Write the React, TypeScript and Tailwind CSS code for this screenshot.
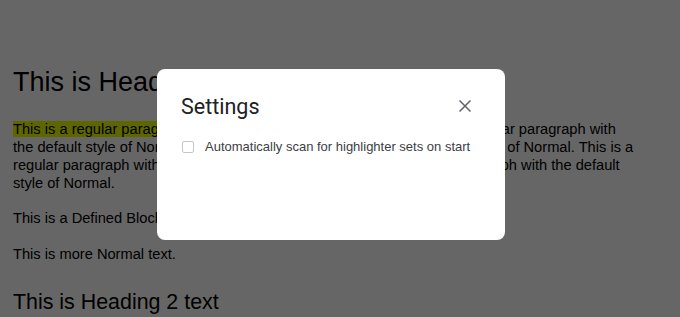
import React from "react";

export default function App() {
  return (
    <div className="relative w-[680px] h-[317px] overflow-hidden bg-white text-black [font-family:'Liberation_Sans',Arial,sans-serif]">
      <div className="pl-[13px] pt-[66px]">
        <h1 className="text-[27px] leading-[32px] font-normal whitespace-nowrap">This is Heading 1 text</h1>
        <p className="mt-[22px] text-[14.67px] leading-[18px] whitespace-nowrap">
          <span className="bg-[#eeff00]">This is a regular paragraph</span>
          <span className="tracking-[0.2px]"> with the default style of Normal. This is a regul</span>ar paragraph with
          <br />
          the default style of Normal. This is a regular paragraph with the default style of Normal. This is a
          <br />
          regular paragraph with the default style of Normal. This is a regular paragraph with the default
          <br />
          style of Normal.
        </p>
        <p className="mt-[17px] text-[14.67px] leading-[18px] whitespace-nowrap">This is a Defined Block text style.</p>
        <p className="mt-[18px] text-[14.67px] leading-[18px] whitespace-nowrap">This is more Normal text.</p>
        <h2 className="mt-[26px] text-[21.4px] leading-[26px] font-normal whitespace-nowrap">This is Heading 2 text</h2>
      </div>

      <div className="absolute inset-0 bg-black/60">
        <div className="absolute left-[157px] top-[69px] w-[348px] h-[171px] bg-white rounded-[8px] pl-[24px] pt-[24px]">
          <div className="flex items-center justify-between pr-[28px]">
            <div className="text-[21.5px] leading-[28px] text-[#202124] [font-family:Roboto,'Open_Sans',sans-serif]">Settings</div>
            <button className="w-[24px] h-[24px] flex items-center justify-center -mt-[2px]">
              <svg width="12" height="12" viewBox="0 0 12 12" fill="none" stroke="#5f6368" strokeWidth="1.5" strokeLinecap="square">
                <path d="M1 1 L11 11 M11 1 L1 11" />
              </svg>
            </button>
          </div>
          <label className="mt-[18px] flex items-center gap-[11px] text-[13px] leading-[16px] text-[#3c4043]">
            <span className="ml-[1px] w-[12px] h-[12px] border border-[#c6c6c6] rounded-[2px] bg-white shrink-0" />
            <span className="whitespace-nowrap">Automatically scan for highlighter sets on start</span>
          </label>
        </div>
      </div>
    </div>
  );
}
